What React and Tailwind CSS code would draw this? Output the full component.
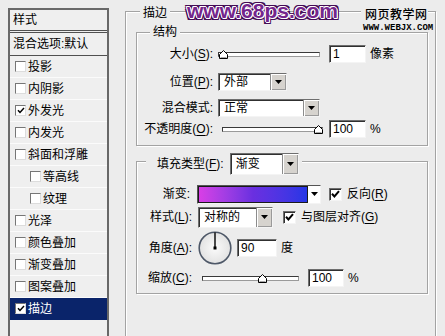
import React from 'react';

// Photoshop "图层样式 / 描边" dialog crop

const LIST = [
  { label: '投影' },
  { label: '内阴影' },
  { label: '外发光', checked: true },
  { label: '内发光' },
  { label: '斜面和浮雕' },
  { label: '等高线', sub: true },
  { label: '纹理', sub: true },
  { label: '光泽' },
  { label: '颜色叠加' },
  { label: '渐变叠加' },
  { label: '图案叠加' },
  { label: '描边', checked: true, active: true },
];

function ListBox({ checked }) {
  return (
    <span className="w-[11px] h-[11px] shrink-0 flex items-center justify-center bg-white border border-t-[#767676] border-l-[#767676] border-b-[#dcdcdc] border-r-[#dcdcdc]">
      {checked && (
        <svg width="8" height="7" viewBox="0 0 8 7">
          <path d="M1 3.2 L3 5.4 L7 1" fill="none" stroke="#000" strokeWidth="1.5" />
        </svg>
      )}
    </span>
  );
}

function CheckBox() {
  return (
    <span className="w-[13px] h-[13px] shrink-0 flex items-center justify-center bg-white border border-t-[#6e6e6e] border-l-[#6e6e6e] border-b-[#f4f4f4] border-r-[#f4f4f4] shadow-[inset_1px_1px_0_#303030]">
      <svg width="9" height="8" viewBox="0 0 9 8">
        <path d="M1 3.8 L3.4 6.4 L8 1.2" fill="none" stroke="#000" strokeWidth="2" />
      </svg>
    </span>
  );
}

function Field({ w, value }) {
  return (
    <div className={`${w} h-[18px] shrink-0 flex items-center pl-[3px] bg-white border border-t-[#6e6e6e] border-l-[#6e6e6e] border-b-[#f4f4f4] border-r-[#f4f4f4] shadow-[inset_1px_1px_0_#303030]`}>
      {value}
    </div>
  );
}

function Arrow() {
  return (
    <svg width="7" height="4" viewBox="0 0 7 4">
      <path d="M0 0 H7 L3.5 4 Z" fill="#000" />
    </svg>
  );
}

function Select({ w, h, value }) {
  return (
    <div className={`${w} ${h} shrink-0 flex bg-white border border-t-[#6e6e6e] border-l-[#6e6e6e] border-b-[#f4f4f4] border-r-[#f4f4f4] shadow-[inset_1px_1px_0_#303030]`}>
      <span className="flex-1 flex items-center pl-[5px]">{value}</span>
      <span className="w-[16px] flex items-center justify-center bg-[#d6d3ce] border-l border-[#8c8c8c] shadow-[inset_1px_1px_0_#fff,inset_-1px_-1px_0_#9a9a9a]">
        <Arrow />
      </span>
    </div>
  );
}

function Slider({ w, thumb }) {
  return (
    <div className={`relative ${w} h-[9px] shrink-0`}>
      <div className="absolute left-0 right-0 top-[2px] h-[5px] bg-white border border-[#3a3a3a] border-b-[#9a9a9a] border-r-[#9a9a9a]" />
      <svg className={`absolute top-0 ${thumb}`} width="9" height="9" viewBox="0 0 9 9">
        <path d="M0.5 8.5 V4.5 L4.5 0.5 L8.5 4.5 V8.5 Z" fill="#fff" stroke="#000" />
        <path d="M1.5 7.5 H7.5" stroke="#a8a8a8" />
      </svg>
    </div>
  );
}

function U({ children }) {
  return <span className="underline underline-offset-[2px] decoration-1">{children}</span>;
}

function Dial() {
  return (
    <svg width="34" height="34" viewBox="0 0 34 34" className="shrink-0">
      <defs>
        <radialGradient id="dialFill" cx="50%" cy="50%" r="50%">
          <stop offset="0%" stopColor="#fbfbfb" />
          <stop offset="100%" stopColor="#e2e2e2" />
        </radialGradient>
      </defs>
      <circle cx="17" cy="17" r="15.8" fill="url(#dialFill)" stroke="#4e5868" strokeWidth="1.6" />
      <path d="M17 17 V1.5" stroke="#000" strokeWidth="1.4" />
      <rect x="15.5" y="15.5" width="3" height="3" fill="#000" />
    </svg>
  );
}

function StyleList() {
  return (
    <div className="ml-[8px] mt-[8px] w-[101px] h-[340px] shrink-0 border-2 border-b-0 border-[#686868] bg-[#efefef]">
      <div className="h-[21px] border-b border-[#505050] pl-[3px] flex items-center">样式</div>
      <div className="mt-[1px] h-[24px] border-y border-[#505050] pl-[3px] flex items-center">混合选项:默认</div>
      {LIST.map((item) => (
        <div
          key={item.label}
          className={`h-[22px] border-b flex items-center gap-[2px] ${item.sub ? 'pl-[20px]' : 'pl-[5px]'} ${
            item.active ? 'bg-[#0a246a] text-white border-[#0a246a]' : 'border-[#fbfbfb]'
          }`}
        >
          <ListBox checked={item.checked} />
          <span>{item.label}</span>
        </div>
      ))}
    </div>
  );
}

function Structure() {
  return (
    <div className="relative w-[292px] h-[114px] border border-[#a3a3a3] shadow-[inset_1px_1px_0_#fff,1px_1px_0_#fff] pt-[8px]">
      <span className="absolute left-[13px] top-[-9px] px-[3px] bg-[#ececec] leading-[16px]">结构</span>

      <div className="h-[26px] flex items-center">
        <span className="w-[76px] text-right">大小(<U>S</U>):</span>
        <div className="ml-[5px]"><Slider w="w-[102px]" thumb="left-[1px]" /></div>
        <div className="ml-[9px]"><Field w="w-[37px]" value="1" /></div>
        <span className="ml-[4px]">像素</span>
      </div>

      <div className="h-[30px] flex items-center">
        <span className="w-[76px] text-right">位置(<U>P</U>):</span>
        <div className="ml-[5px]"><Select w="w-[69px]" h="h-[18px]" value="外部" /></div>
      </div>

      <div className="h-[22px] flex items-center">
        <span className="w-[76px] text-right">混合模式:</span>
        <div className="ml-[5px]"><Select w="w-[102px]" h="h-[18px]" value="正常" /></div>
      </div>

      <div className="h-[20px] flex items-center">
        <span className="w-[76px] text-right">不透明度(<U>O</U>):</span>
        <div className="ml-[9px]"><Slider w="w-[101px]" thumb="left-[92px]" /></div>
        <div className="ml-[6px]"><Field w="w-[37px]" value="100" /></div>
        <span className="ml-[4px]">%</span>
      </div>
    </div>
  );
}

function Fill() {
  return (
    <div className="relative mt-[15px] w-[292px] h-[133px] border border-[#a3a3a3] shadow-[inset_1px_1px_0_#fff,1px_1px_0_#fff] pt-[21px]">
      <div className="absolute left-[9px] top-[-9px] flex items-center bg-[#ececec] pl-[11px] pr-[3px]">
        <span>填充类型(<U>F</U>):</span>
        <div className="ml-[6px]"><Select w="w-[69px]" h="h-[22px]" value="渐变" /></div>
      </div>

      <div className="h-[22px] flex items-center">
        <span className="w-[53px] text-right">渐变:</span>
        <div className="ml-[7px] w-[124px] h-[19px] flex border border-t-[#555] border-l-[#555] border-b-[#f4f4f4] border-r-[#f4f4f4]">
          <div className="flex-1 border border-[#1a1a1a] bg-linear-to-r from-[#d93ee6] via-[#6a2fe0] to-[#2436e6]" />
          <div className="w-[12px] bg-white flex items-center justify-center">
            <Arrow />
          </div>
        </div>
        <div className="ml-[8px]"><CheckBox /></div>
        <span className="ml-[5px]">反向(<U>R</U>)</span>
      </div>

      <div className="h-[24px] flex items-center">
        <span className="w-[55px] text-right">样式(<U>L</U>):</span>
        <div className="ml-[6px]"><Select w="w-[75px]" h="h-[21px]" value="对称的" /></div>
        <div className="ml-[10px]"><CheckBox /></div>
        <span className="ml-[5px]">与图层对齐(<U>G</U>)</span>
      </div>

      <div className="h-[38px] flex items-center">
        <span className="w-[55px] text-right">角度(<U>A</U>):</span>
        <div className="ml-[6px]"><Dial /></div>
        <div className="ml-[5px]"><Field w="w-[40px]" value="90" /></div>
        <span className="ml-[4px]">度</span>
      </div>

      <div className="h-[22px] flex items-center">
        <span className="w-[55px] text-right">缩放(<U>C</U>):</span>
        <div className="ml-[10px]"><Slider w="w-[97px]" thumb="left-[56px]" /></div>
        <div className="ml-[9px]"><Field w="w-[36px]" value="100" /></div>
        <span className="ml-[4px]">%</span>
      </div>
    </div>
  );
}

export default function App() {
  return (
    <div className="relative flex w-[445px] h-[336px] overflow-hidden bg-[#ececec] text-[12px] leading-none text-black font-['Liberation_Sans','Noto_Sans_CJK_SC',sans-serif]">
      <StyleList />

      <div className="relative ml-[16px] mt-[11px] w-[311px] h-[340px] shrink-0 border border-[#a3a3a3] shadow-[inset_1px_1px_0_#fff,1px_1px_0_#fff] pl-[10px] pt-[20px]">
        <span className="absolute left-[14px] top-[-7px] px-[3px] bg-[#ececec] leading-[16px]">描边</span>
        <Structure />
        <Fill />
      </div>

      {/* site watermarks */}
      <div className="absolute left-[187px] top-[-1px] text-[21px] leading-[24px] font-bold text-[#74268c] font-['Liberation_Sans',sans-serif] [text-shadow:1px_0_0_#fff,-1px_0_0_#fff,0_1px_0_#fff,0_-1px_0_#fff,1px_1px_0_#fff,-1px_-1px_0_#fff,2px_0_0_#420a54,-2px_0_0_#420a54,0_2px_0_#420a54,0_-2px_0_#420a54,2px_2px_0_#420a54,-2px_-2px_0_#420a54,2px_-2px_0_#420a54,-2px_2px_0_#420a54]">
        www.68ps.com
      </div>
      <div className="absolute left-[361px] top-[7px] w-[67px] pl-[4px] bg-[#ececec] text-[12px] leading-[16px] font-medium tracking-[0.5px]">
        网页教学网
      </div>
      <div className="absolute left-[363px] top-[23px] text-[9px] leading-[10px] font-bold font-['Liberation_Mono',monospace]">
        WWW.WEBJX.COM
      </div>
    </div>
  );
}
